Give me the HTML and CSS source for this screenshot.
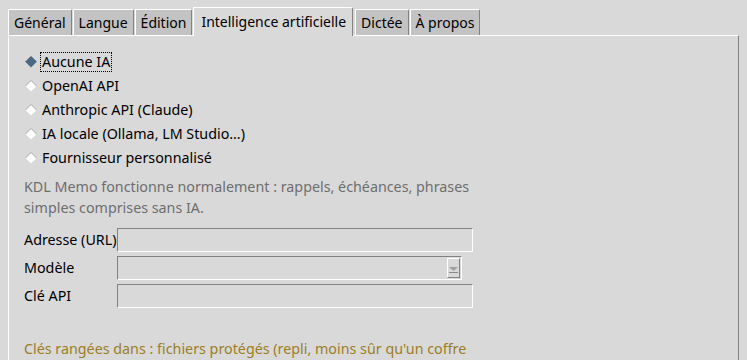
FILE: index.html
```html
<!DOCTYPE html>
<html lang="fr">
<head>
  <meta charset="UTF-8">
  <title>Paramètres</title>
  <link rel="stylesheet" href="styles.css">
</head>
<body>
  <div class="notebook">
    <div class="tabs">
      <div class="tab">Général</div>
      <div class="tab">Langue</div>
      <div class="tab">Édition</div>
      <div class="tab active">Intelligence artificielle</div>
      <div class="tab">Dictée</div>
      <div class="tab">À propos</div>
    </div>

    <div class="pane">
      <div class="radios">
        <label class="radio checked">
          <svg class="diamond" width="12" height="12" viewBox="0 0 12 12">
            <polygon points="6,0.5 11.5,6 6,11.5 0.5,6" fill="#4a6984"/>
            <polyline points="0.5,6 6,0.5 11.5,6" fill="none" stroke="#3a5468" stroke-width="1"/>
          </svg>
          <span class="text focus">Aucune IA</span>
        </label>
        <label class="radio">
          <svg class="diamond" width="12" height="12" viewBox="0 0 12 12">
            <polygon points="6,0.5 11.5,6 6,11.5 0.5,6" fill="#fff"/>
            <polyline points="0.5,6 6,0.5 11.5,6" fill="none" stroke="#a8a8a8" stroke-width="1"/>
          </svg>
          <span class="text">OpenAI API</span>
        </label>
        <label class="radio">
          <svg class="diamond" width="12" height="12" viewBox="0 0 12 12">
            <polygon points="6,0.5 11.5,6 6,11.5 0.5,6" fill="#fff"/>
            <polyline points="0.5,6 6,0.5 11.5,6" fill="none" stroke="#a8a8a8" stroke-width="1"/>
          </svg>
          <span class="text">Anthropic API (Claude)</span>
        </label>
        <label class="radio">
          <svg class="diamond" width="12" height="12" viewBox="0 0 12 12">
            <polygon points="6,0.5 11.5,6 6,11.5 0.5,6" fill="#fff"/>
            <polyline points="0.5,6 6,0.5 11.5,6" fill="none" stroke="#a8a8a8" stroke-width="1"/>
          </svg>
          <span class="text">IA locale (Ollama, LM Studio…)</span>
        </label>
        <label class="radio">
          <svg class="diamond" width="12" height="12" viewBox="0 0 12 12">
            <polygon points="6,0.5 11.5,6 6,11.5 0.5,6" fill="#fff"/>
            <polyline points="0.5,6 6,0.5 11.5,6" fill="none" stroke="#a8a8a8" stroke-width="1"/>
          </svg>
          <span class="text">Fournisseur personnalisé</span>
        </label>
      </div>

      <p class="info">KDL Memo fonctionne normalement : rappels, échéances, phrases simples comprises sans IA.</p>

      <div class="form">
        <span class="lbl">Adresse (URL)</span>
        <div class="entry"></div>

        <span class="lbl">Modèle</span>
        <div class="combo">
          <div class="combo-btn">
            <svg width="9" height="6" viewBox="0 0 9 6">
              <polygon points="0,0 9,0 4.5,4" fill="#a0a0a0"/>
              <rect x="0" y="5" width="9" height="1" fill="#8a8a8a"/>
            </svg>
          </div>
        </div>

        <span class="lbl">Clé API</span>
        <div class="entry"></div>
      </div>

      <p class="note">Clés rangées dans : fichiers protégés (repli, moins sûr qu'un coffre</p>
    </div>
  </div>
</body>
</html>
```

FILE: styles.css
```css
body {
  margin: 0;
  background-color: #d9d9d9;
  font-family: "Noto Sans", "Open Sans", sans-serif;
  font-size: 14.3px;
  color: #000;
  overflow: hidden;
  height: 360px;
}

.notebook {
  padding: 7px 0 0 8px;
  width: 731px;
}

.tabs {
  display: flex;
  align-items: flex-end;
  gap: 1px;
  height: 28px;
}

.tab {
  height: 26px;
  line-height: 25px;
  padding: 0 5px;
  font-size: 14px;
  background-color: #c3c3c3;
  border-top: 1px solid #fff;
  border-left: 1px solid #fff;
  border-right: 1px solid #828282;
  border-top-right-radius: 2px;
  box-sizing: border-box;
  white-space: nowrap;
}

.tab.active {
  background-color: #d9d9d9;
  height: 29px;
  line-height: 27px;
  padding: 0 6px 0 7px;
  margin: 0 1px -1px 0;
  position: relative;
  z-index: 1;
}

.pane {
  border-top: 1px solid #fff;
  border-left: 1px solid #fff;
  border-right: 1px solid #828282;
  height: 325px;
  padding: 14px 16px 0 16px;
  box-sizing: border-box;
}

.radios {
  display: flex;
  flex-direction: column;
}

.radio {
  display: flex;
  align-items: center;
  height: 24px;
}

.diamond {
  margin: 0 3px 0 0;
}

.radio .text {
  padding: 0 1px;
  line-height: 18px;
  border: 1px dotted transparent;
}

.radio .text.focus {
  border-color: #000;
}

.info {
  margin: 6px 0 0 -1px;
  max-width: 460px;
  line-height: 21px;
  color: #6e6e6e;
}

.form {
  display: grid;
  grid-template-columns: max-content 356px;
  justify-content: start;
  row-gap: 4px;
  margin: 10px 0 0 -1px;
  align-items: center;
}

.lbl {
  line-height: 24px;
}

.entry, .combo {
  height: 24px;
  box-sizing: border-box;
  border-top: 1px solid #828282;
  border-left: 1px solid #828282;
  border-bottom: 1px solid #fff;
  border-right: 1px solid #fff;
}

.combo {
  width: 345px;
  display: flex;
  justify-content: flex-end;
  padding: 1px 1px 1px 0;
}

.combo-btn {
  width: 13px;
  box-sizing: border-box;
  border-left: 1px solid #fff;
  border-top: 1px solid #fff;
  border-right: 1px solid #828282;
  border-bottom: 1px solid #828282;
  display: flex;
  align-items: flex-end;
  justify-content: center;
  padding-bottom: 4px;
}

.note {
  margin: 30px 0 0 -1px;
  white-space: nowrap;
  line-height: 21px;
  color: #9c7e24;
}
```
